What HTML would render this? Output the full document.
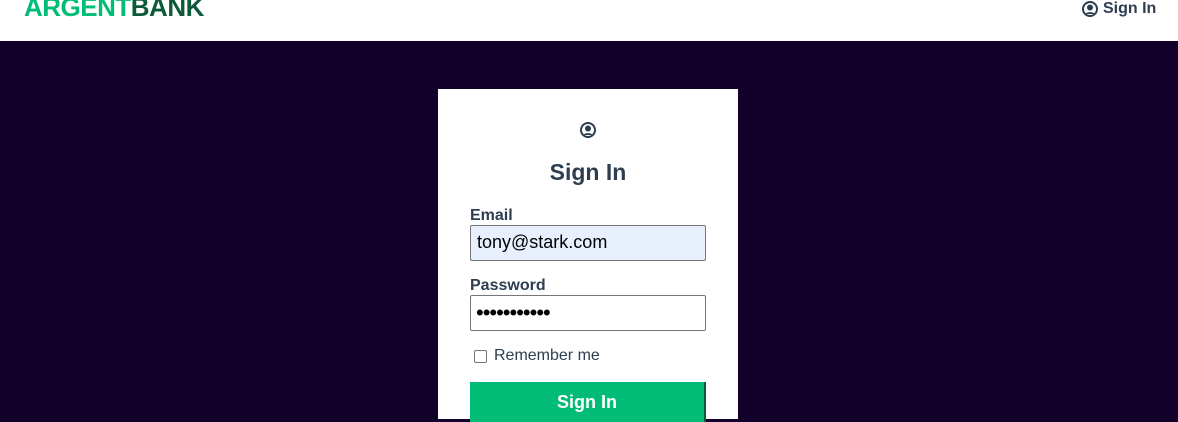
<!DOCTYPE html>
<html><head><style>
*{box-sizing:border-box;margin:0;padding:0}
body{width:1178px;height:415px;overflow:hidden;font-family:"Liberation Sans",sans-serif;background:#12002b;position:relative}
.nav{position:absolute;left:0;top:0;width:1178px;height:41px;background:#fff}
.logo{position:absolute;left:24px;top:-8px;font-size:26px;font-weight:bold;letter-spacing:-0.5px}
.logo .a{color:#00bc77}.logo .b{color:#0d5a3a}
.si{position:absolute;left:1082px;top:0;font-size:16px;font-weight:bold;color:#2c3e50;display:flex;align-items:center;gap:5px}
.card{position:absolute;left:438px;top:89px;width:300px;height:330px;background:#fff}
.ico{position:absolute;left:142px;top:33px}
h1{position:absolute;left:0;width:300px;text-align:center;top:70px;font-size:23px;color:#2c3e50}
label{position:absolute;left:32px;font-size:16px;font-weight:bold;color:#2c3e50}
.in{position:absolute;left:32px;width:236px;height:36px;border:1px solid #767676;border-radius:2px;font-size:18px;padding:6px 6px;color:#000}
.rm{position:absolute;left:36px;top:258px;font-size:16px;color:#2c3e50;display:flex;align-items:center;gap:7px}
.cb{width:13px;height:13px;border:1px solid #767676;border-radius:2px}
.btn{position:absolute;left:32px;top:293px;width:236px;height:40px;background:#00bc77;border-right:2px solid #0d5a3a;color:#fff;font-weight:bold;font-size:18px;text-align:center;padding-top:10px}
</style></head><body>
<div class="nav"><div class="logo"><span class="a">ARGENT</span><span class="b">BANK</span></div>
<div class="si"><svg width="16" height="16" viewBox="0 0 16 16"><circle cx="8" cy="8" r="7" fill="none" stroke="#2c3e50" stroke-width="2"/><circle cx="8" cy="6.5" r="3" fill="#2c3e50"/><path d="M3.5 13c1-2.5 8-2.5 9 0" fill="#2c3e50"/></svg>Sign In</div></div>
<div class="card">
<svg class="ico" width="16" height="16" viewBox="0 0 16 16"><circle cx="8" cy="8" r="7" fill="none" stroke="#2c3e50" stroke-width="2"/><circle cx="8" cy="6.5" r="3" fill="#2c3e50"/><path d="M3.5 13c1-2.5 8-2.5 9 0" fill="#2c3e50"/></svg>
<h1>Sign In</h1>
<label style="top:118px">Email</label>
<div class="in" style="top:136px;background:#e8f0fe">tony@stark.com</div>
<label style="top:188px">Password</label>
<div class="in" style="top:206px;font-size:22px;letter-spacing:-1px;padding:3px 5px;line-height:28px">•••••••••••</div>
<div class="rm"><div class="cb"></div>Remember me</div>
<div class="btn">Sign In</div>
</div>
</body></html>
